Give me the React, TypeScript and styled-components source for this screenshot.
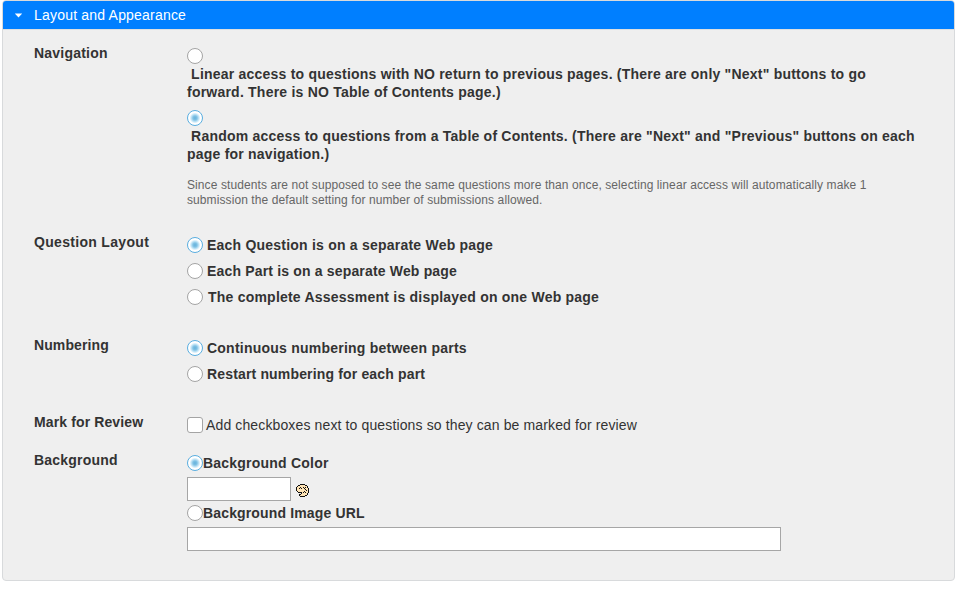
import React from "react";
import styled, { createGlobalStyle } from "styled-components";

const GlobalStyle = createGlobalStyle`
  body { margin: 0; background: #fff; font-family: "Liberation Sans", Arial, sans-serif; }
  * { box-sizing: border-box; }
`;

const Panel = styled.section`
  width: 953px;
  height: 581px;
  margin-left: 2px;
  border: 1px solid #d8dadc;
  border-radius: 4px;
  background: #efefef;
  color: #333;
  font-size: 14px;
  line-height: 18px;
  overflow: hidden;
`;

const Header = styled.header`
  display: flex;
  align-items: center;
  height: 28px;
  padding-left: 11px;
  gap: 11px;
  background: #007fff;
  color: #fff;
`;

const Content = styled.div`
  border-top: 1px solid #dddfe1;
  padding: 14px 0 0 31px;
`;

const Row = styled.div<{ $height: number }>`
  display: grid;
  grid-template-columns: 153px 1fr;
  height: ${(p) => p.$height}px;
`;

const Text = styled.span<{ $spacing?: number }>`
  font-weight: bold;
  letter-spacing: ${(p) => p.$spacing ?? 0.22}px;
  white-space: pre;
`;

const Options = styled.div<{ $top: number; $gap: number }>`
  display: flex;
  flex-direction: column;
  padding-top: ${(p) => p.$top}px;
  gap: ${(p) => p.$gap}px;
`;

const Option = styled.label<{ $gap: number }>`
  display: flex;
  align-items: center;
  height: 18px;
  gap: ${(p) => p.$gap}px;
`;

const Radio = styled.input.attrs({ type: "radio" })`
  appearance: none;
  display: block;
  flex: none;
  width: 16px;
  height: 16px;
  margin: 0;
  border: 1px solid #a4a4a4;
  border-radius: 50%;
  background: #fff;
  &:checked {
    border-color: #5aaee0;
    background: radial-gradient(circle, #65b2dc 0, #7fc1e4 2px, #b9e0f4 3.6px, #fff 5.4px);
  }
`;

const Check = styled.input.attrs({ type: "checkbox" })`
  appearance: none;
  flex: none;
  width: 16px;
  height: 16px;
  margin: 0;
  border: 1px solid #a4a4a4;
  border-radius: 3px;
  background: #fff;
`;

const Choice = styled.label`
  display: flex;
  flex-direction: column;
  gap: 1px;
`;

const Note = styled.p`
  margin: 6px 0 0;
  color: #666;
  font-size: 12px;
  line-height: 15px;
  letter-spacing: 0.09px;
  white-space: pre;
`;

const Plain = styled.span<{ $spacing: number }>`
  letter-spacing: ${(p) => p.$spacing}px;
  white-space: pre;
`;

const Field = styled.input<{ $width: number }>`
  display: block;
  width: ${(p) => p.$width}px;
  height: 24px;
  margin: 0;
  border: 1px solid #a6a6a6;
  background: #fff;
`;

const FieldGroup = styled.div`
  display: flex;
  flex-direction: column;
  gap: 5px;
`;

const ColorLine = styled.div`
  display: flex;
  align-items: flex-start;
  gap: 5px;
  svg { margin-top: 7px; }
`;

const Palette = () => (
  <svg width="13" height="13" viewBox="0 0 13 13" shapeRendering="crispEdges">
    <path d="M4 1h6v1h1v2h1v5h-1v2h-2v1H4v-2h1V8H2V7H1V3h1V2h2z" fill="#ffe4b5" />
    <path
      d="M4 0h5v1H4zM2 1h2v1H2zM9 1h2v1H9zM1 2h1v1H1zM11 2h1v2h-1zM0 3h1v4H0zM12 4h1v5h-1zM1 7h1v1H1zM2 8h4v1H2zM5 9h1v1H5zM4 10h1v1H4zM3 10h1v2H3zM4 12h5v1H4zM9 11h2v1H9zM11 9h1v2h-1zM3 4h1v1H3zM4 3h1v1H4zM5 4h1v1H5zM7 3h1v1H7zM8 4h1v1H8zM9 3h1v1H9zM9 5h1v1H9zM10 6h1v1h-1zM8 7h1v1H8zM9 8h1v1H9zM7 8h1v1H7z"
      fill="#111"
    />
  </svg>
);

export default function App() {
  return (
    <>
      <GlobalStyle />
      <Panel>
        <Header>
          <svg width="9" height="5" viewBox="0 0 9 5">
            <path d="M.8.5h7.4l-3.7 4z" fill="#fff" />
          </svg>
          <Plain $spacing={0.2}>Layout and Appearance</Plain>
        </Header>
        <Content>
          <Row $height={189}>
            <Text>Navigation</Text>
            <Options $top={4} $gap={9}>
              <Choice>
                <Radio name="navigation" />
                <Text>{' Linear access to questions with NO return to previous pages. (There are only "Next" buttons to go\nforward. There is NO Table of Contents page.)'}</Text>
              </Choice>
              <Choice>
                <Radio name="navigation" defaultChecked />
                <Text>{' Random access to questions from a Table of Contents. (There are "Next" and "Previous" buttons on each\npage for navigation.)'}</Text>
              </Choice>
              <Note>{"Since students are not supposed to see the same questions more than once, selecting linear access will automatically make 1\nsubmission the default setting for number of submissions allowed."}</Note>
            </Options>
          </Row>
          <Row $height={103}>
            <Text $spacing={0.31}>Question Layout</Text>
            <Options $top={3} $gap={8}>
              <Option $gap={4}><Radio name="layout" defaultChecked /><Text>Each Question is on a separate Web page</Text></Option>
              <Option $gap={4}><Radio name="layout" /><Text $spacing={0.17}>Each Part is on a separate Web page</Text></Option>
              <Option $gap={5}><Radio name="layout" /><Text $spacing={0.22}>The complete Assessment is displayed on one Web page</Text></Option>
            </Options>
          </Row>
          <Row $height={77}>
            <Text $spacing={0.1}>Numbering</Text>
            <Options $top={3} $gap={8}>
              <Option $gap={4}><Radio name="numbering" defaultChecked /><Text $spacing={0.23}>Continuous numbering between parts</Text></Option>
              <Option $gap={4}><Radio name="numbering" /><Text $spacing={0.16}>Restart numbering for each part</Text></Option>
            </Options>
          </Row>
          <Row $height={38}>
            <Text $spacing={0.12}>Mark for Review</Text>
            <Options $top={3} $gap={0}>
              <Option $gap={3}><Check /><Plain $spacing={0.13}>Add checkboxes next to questions so they can be marked for review</Plain></Option>
            </Options>
          </Row>
          <Row $height={110}>
            <Text>Background</Text>
            <Options $top={3} $gap={3}>
              <FieldGroup>
                <Option $gap={0}><Radio name="background" defaultChecked /><Text>Background Color</Text></Option>
                <ColorLine><Field $width={104} aria-label="Background color" /><Palette /></ColorLine>
              </FieldGroup>
              <FieldGroup>
                <Option $gap={0}><Radio name="background" /><Text $spacing={0.15}>Background Image URL</Text></Option>
                <Field $width={594} aria-label="Background image URL" />
              </FieldGroup>
            </Options>
          </Row>
        </Content>
      </Panel>
    </>
  );
}
